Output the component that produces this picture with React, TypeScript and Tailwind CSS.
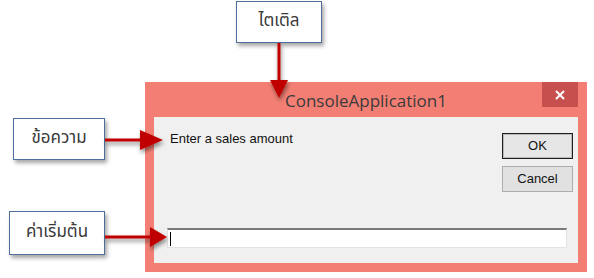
import React from "react";

function Label({ text, className }: { text: string; className: string }) {
  return (
    <div
      className={`absolute flex items-center justify-center bg-white border border-[#4d6f99] shadow-[2px_3px_4px_rgba(0,0,0,0.35)] text-[17px] text-[#3a3a3a] ${className}`}
      style={{ fontFamily: '"Noto Sans Thai", "Noto Sans", Tahoma, sans-serif' }}
    >
      {text}
    </div>
  );
}

export default function App() {
  return (
    <div className="relative w-[594px] h-[278px] bg-white overflow-hidden">
      {/* Dialog */}
      <div className="absolute left-[145px] top-[82px] w-[442px] h-[190px] bg-[#f37f74] flex flex-col">
        <div className="relative h-[35px] flex items-center justify-center">
          <span
            className="text-[17px] text-[#3b3b3b] mt-[2px]"
            style={{ fontFamily: '"Open Sans", "Noto Sans", sans-serif' }}
          >
            ConsoleApplication1
          </span>
          <div className="absolute right-[9px] top-0 w-[36px] h-[25px] bg-[#c74f4d] flex items-center justify-center">
            <svg width="10" height="10" viewBox="0 0 10 10">
              <path d="M1 1 L9 9 M9 1 L1 9" stroke="white" strokeWidth="2" />
            </svg>
          </div>
        </div>
        <div
          className="mx-[9px] mb-[9px] flex-1 bg-[#f0f0f0] flex flex-col"
          style={{ fontFamily: '"Liberation Sans", Arial, sans-serif' }}
        >
          <div className="flex justify-between pl-[16px] pr-[5px] pt-[14px]">
            <div className="text-[13px] text-[#111] leading-[15px]">Enter a sales amount</div>
            <div className="flex flex-col gap-[7px] pt-[2px]">
              <div className="w-[71px] h-[26px] border border-[#202020] bg-[#e6e6e6] flex items-center justify-center text-[13px] text-[#111] outline outline-1 -outline-offset-2 outline-[#b8b8b8]">
                OK
              </div>
              <div className="w-[71px] h-[26px] border border-[#adadad] bg-[#e1e1e1] flex items-center justify-center text-[13px] text-[#111]">
                Cancel
              </div>
            </div>
          </div>
          <div className="mt-auto mb-[15px] ml-[13px] w-[400px] h-[20px] bg-white border border-[#e3e3e3] border-t-[#7a7a7a] border-t-2 flex items-center pl-[2px]">
            <div className="w-[1px] h-[14px] bg-black" />
          </div>
        </div>
      </div>

      {/* Labels */}
      <Label text="ไตเติล" className="left-[236px] top-[1px] w-[86px] h-[42px]" />
      <Label text="ข้อความ" className="left-[13px] top-[118px] w-[92px] h-[42px]" />
      <Label text="ค่าเริ่มต้น" className="left-[9px] top-[211px] w-[96px] h-[44px]" />

      {/* Arrows */}
      <svg className="absolute inset-0 pointer-events-none" width="594" height="278">
        <defs>
          <filter id="sh" x="-50%" y="-50%" width="200%" height="200%">
            <feDropShadow dx="1" dy="3" stdDeviation="2" floodColor="#000" floodOpacity="0.45" />
          </filter>
        </defs>
        <g filter="url(#sh)" fill="#c00000">
          <rect x="277.5" y="43" width="3" height="40" />
          <path d="M270 80 L288 80 L279 98 Z" />
          <rect x="105" y="138.5" width="38" height="3" />
          <path d="M140 130 L163 140 L140 150 Z" />
          <rect x="105" y="235.5" width="48" height="3" />
          <path d="M150 227 L167 237 L150 247 Z" />
        </g>
      </svg>
    </div>
  );
}
